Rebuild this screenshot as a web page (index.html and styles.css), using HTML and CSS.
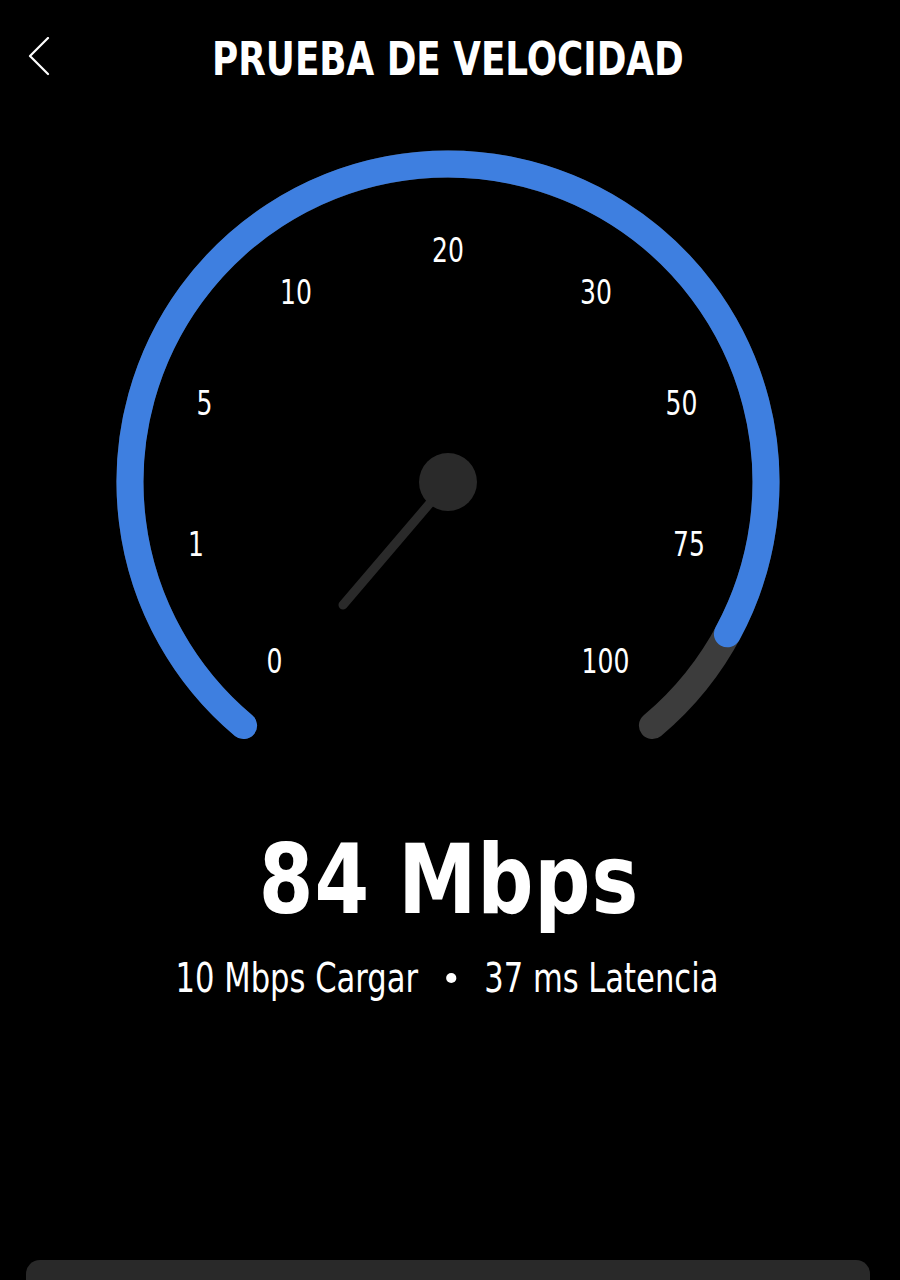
FILE: index.html
```html
<!DOCTYPE html>
<html lang="es">
<head>
<meta charset="utf-8">
<title>Prueba de velocidad</title>
<link rel="stylesheet" href="styles.css">
</head>
<body>
<div class="screen">
  <header class="topbar">
    <button class="back" aria-label="Atrás">
      <svg width="24" height="40" viewBox="0 0 24 40"><path d="M21 1 L3 19 L21 37" fill="none" stroke="#fff" stroke-width="2.2" stroke-linecap="round" stroke-linejoin="round"/></svg>
    </button>
    <h1 class="title">PRUEBA DE VELOCIDAD</h1>
    <span class="spacer"></span>
  </header>

  <svg class="gauge" width="900" height="640" viewBox="0 120 900 640">
    <path d="M243.6 725.6 A318 318 0 1 1 652.4 725.6" fill="none" stroke="#3c3c3c" stroke-width="27" stroke-linecap="round"/>
    <path d="M243.6 725.6 A318 318 0 1 1 727.4 633.8" fill="none" stroke="#3e7fe0" stroke-width="27" stroke-linecap="round"/>
    <line x1="448" y1="482" x2="343" y2="605" stroke="#2a2a2a" stroke-width="9" stroke-linecap="round"/>
    <circle cx="448" cy="482" r="29" fill="#2a2a2a"/>
    <g class="ticks">
      <text transform="translate(274.5 673) scale(0.82 1)">0</text>
      <text transform="translate(196 556) scale(0.82 1)">1</text>
      <text transform="translate(204.5 415) scale(0.82 1)">5</text>
      <text transform="translate(296 304) scale(0.82 1)">10</text>
      <text transform="translate(448 262) scale(0.82 1)">20</text>
      <text transform="translate(596 304) scale(0.82 1)">30</text>
      <text transform="translate(681.5 415) scale(0.82 1)">50</text>
      <text transform="translate(689 556) scale(0.82 1)">75</text>
      <text transform="translate(605.5 673) scale(0.82 1)">100</text>
    </g>
  </svg>

  <div class="speed">84 Mbps</div>
  <div class="stats">
    <span>10 Mbps Cargar</span>
    <span class="dot"></span>
    <span>37 ms Latencia</span>
  </div>

  <div class="sheet"></div>
</div>
</body>
</html>
```

FILE: styles.css
```css
html, body {
  margin: 0;
  padding: 0;
  background: #000;
}

.screen {
  width: 900px;
  height: 1280px;
  overflow: hidden;
  display: flex;
  flex-direction: column;
  color: #fff;
  font-family: "DejaVu Sans Condensed", "Liberation Sans", sans-serif;
}

.screen > * {
  flex-shrink: 0;
}

.topbar {
  height: 120px;
  display: grid;
  grid-template-columns: 1fr auto 1fr;
  align-items: start;
}

.back {
  justify-self: start;
  margin: 37px 0 0 27px;
  padding: 0;
  border: 0;
  background: none;
  width: 24px;
  height: 40px;
  display: block;
}

.back svg {
  display: block;
}

.title {
  margin: 36px 0 0 0;
  font-size: 46px;
  line-height: 1;
  font-weight: 700;
  white-space: nowrap;
  transform: translateX(-2px) scaleX(0.864);
}

.gauge {
  display: block;
}

.ticks text {
  fill: #fff;
  font-family: "DejaVu Sans Condensed", sans-serif;
  font-size: 34px;
  text-anchor: middle;
}

.speed {
  margin-top: 71px;
  text-align: center;
  font-size: 97px;
  line-height: 1;
  font-weight: 700;
  letter-spacing: 1px;
  transform: translateX(-1px) scaleX(0.9);
}

.stats {
  margin-top: 30px;
  display: flex;
  justify-content: center;
  align-items: center;
  gap: 33px;
  font-size: 40px;
  line-height: 1;
  white-space: nowrap;
  transform: translateX(-3px) scaleX(0.85);
}

.dot {
  width: 12px;
  height: 10px;
  border-radius: 50%;
  background: #fff;
}

.sheet {
  margin: 262px 0 0 26px;
  width: 844px;
  height: 60px;
  background: #292929;
  border-radius: 14px 14px 0 0;
}
```
